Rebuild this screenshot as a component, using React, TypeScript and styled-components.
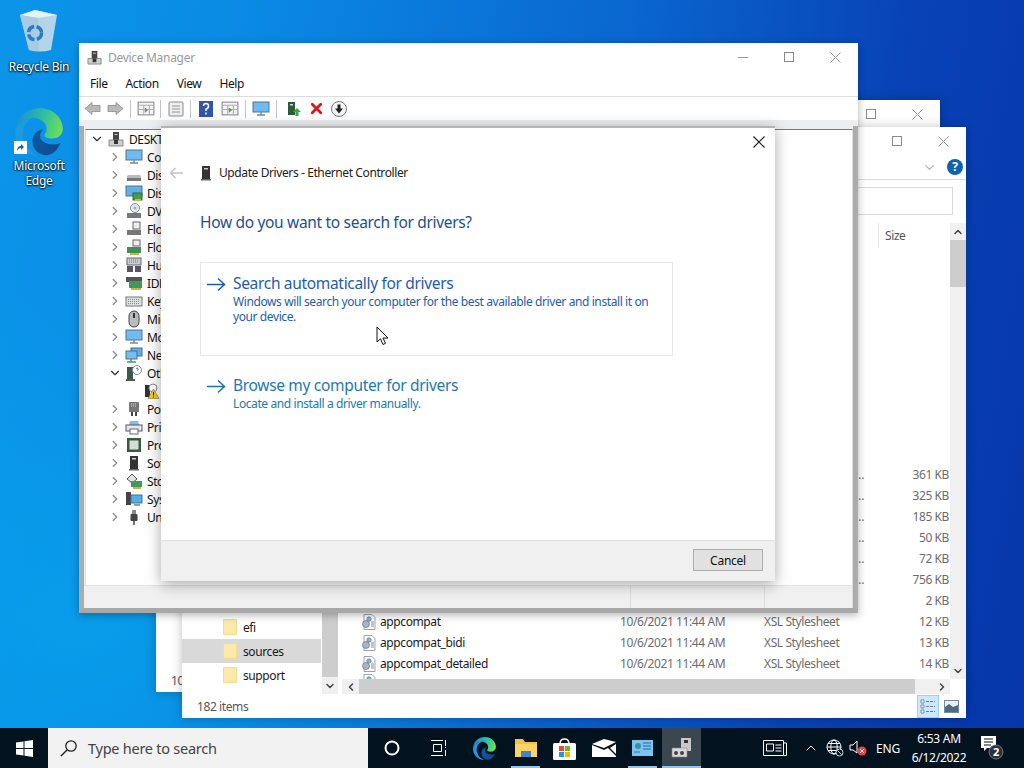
import React from "react";
import styled, { createGlobalStyle } from "styled-components";
import { ChevronRight, ChevronDown, ChevronUp, ChevronLeft, X } from "lucide-react";

const GlobalStyle = createGlobalStyle`
  html, body { margin: 0; padding: 0; width: 1024px; height: 768px; overflow: hidden; }
  * { box-sizing: border-box; }
  body { font-family: "Noto Sans", "Open Sans", "Liberation Sans", sans-serif; font-size: 12px; letter-spacing: -0.4px; }
`;

const Screen = styled.div`
  position: relative;
  width: 1024px;
  height: 768px;
  overflow: hidden;
  display: flex;
  flex-direction: column;
`;

const Wallpaper = styled.div`
  flex: 1;
  background:
    radial-gradient(ellipse 420px 340px at 10% 85%, rgba(6, 170, 240, 0.55), transparent),
    linear-gradient(100deg, #0b95e9 0%, #0a8ae4 22%, #0a66d0 55%, #0842b6 80%, #0636aa 100%);
`;

/* desktop icons */
const DesktopIcons = styled.div`
  position: absolute;
  left: 0;
  top: 8px;
  width: 78px;
  display: flex;
  flex-direction: column;
  gap: 32px;
  align-items: center;
`;

const DesktopIcon = styled.div<{ $gap?: number }>`
  position: relative;
  display: flex;
  flex-direction: column;
  align-items: center;
  gap: ${(p) => p.$gap ?? 0}px;
  color: #fff;
  font-size: 12px;
  line-height: 15px;
  letter-spacing: -0.25px;
  text-align: center;
  text-shadow: 0 1px 2px #000, 0 0 2px #000;
`;

const ShortcutBadge = styled.span`
  position: absolute;
  left: 1px;
  top: 35px;
  width: 13px;
  height: 13px;
  background: #fff;
  display: flex;
  align-items: center;
  justify-content: center;
`;

/* windows */
const Win = styled.div`
  position: absolute;
  background: #fff;
  display: flex;
  flex-direction: column;
`;

const BackWindow = styled(Win)`
  left: 156px;
  top: 100px;
  width: 784px;
  height: 592px;
  box-shadow: 0 0 10px rgba(0, 0, 0, 0.25);
`;

const Explorer = styled(Win)`
  left: 182px;
  top: 127px;
  width: 784px;
  height: 591px;
  box-shadow: 0 0 10px rgba(0, 0, 0, 0.25);
`;

const DeviceManager = styled(Win)`
  left: 79px;
  top: 43px;
  width: 779px;
  height: 570px;
  box-shadow: 0 2px 8px rgba(0, 0, 0, 0.3);
`;

const UpdateDialog = styled(Win)`
  left: 161px;
  top: 126px;
  width: 614px;
  height: 455px;
  border-top: 2px solid #b4b4b4;
  box-shadow: 0 3px 14px rgba(0, 0, 0, 0.35);
`;

const TitleBar = styled.div`
  height: 28px;
  flex: none;
  display: flex;
  align-items: center;
  color: #999;
  font-size: 12px;
  letter-spacing: -0.3px;
`;

const TitleIcon = styled.span`
  display: flex;
  margin: 0 6px 0 8px;
`;

const TitleText = styled.span`
  flex: 1;
`;

const CaptionButton = styled.span`
  width: 46px;
  height: 28px;
  display: flex;
  align-items: center;
  justify-content: center;
`;

const Caption = () => (
  <>
    <CaptionButton>
      <svg width="11" height="11"><path d="M0 5.500h10" stroke="#999" /></svg>
    </CaptionButton>
    <CaptionButton>
      <svg width="11" height="11"><rect x=".5" y=".5" width="9" height="9" fill="none" stroke="#8a8a8a" /></svg>
    </CaptionButton>
    <CaptionButton>
      <svg width="11" height="11"><path d="M.5.5l10 10M10.500.5l-10 10" stroke="#999" /></svg>
    </CaptionButton>
  </>
);

/* explorer */
const RibbonRow = styled.div`
  height: 25px;
  flex: none;
  display: flex;
  align-items: center;
  justify-content: flex-end;
  gap: 10px;
  padding-right: 3px;
  border-bottom: 1px solid #dadada;
  color: #b5b5b5;
`;

const HelpBadge = styled.span`
  width: 16px;
  height: 16px;
  border-radius: 50%;
  background: #0f62b0;
  color: #fff;
  font-size: 12px;
  font-weight: 700;
  line-height: 16px;
  text-align: center;
`;

const AddressRow = styled.div`
  height: 43px;
  flex: none;
  padding: 7px 13px 8px 0;
  display: flex;
  justify-content: flex-end;
`;

const SearchBox = styled.div`
  width: 300px;
  border: 1px solid #d9d9d9;
`;

const ExplorerBody = styled.div`
  flex: 1;
  min-height: 0;
  display: flex;
`;

const NavPane = styled.div`
  width: 156px;
  flex: none;
  display: flex;
`;

const NavTree = styled.div`
  flex: 1;
  display: flex;
  flex-direction: column;
  justify-content: flex-end;
  padding-bottom: 7px;
  margin-right: 1px;
`;

const NavRow = styled.div<{ $selected?: boolean }>`
  height: 24px;
  display: flex;
  align-items: center;
  gap: 6px;
  padding-left: 41px;
  color: #1a1a1a;
  background: ${(p) => (p.$selected ? "#d9d9d9" : "transparent")};
`;

const VScroll = styled.div`
  width: 16px;
  flex: none;
  display: flex;
  flex-direction: column;
  align-items: center;
  background: #f0f0f0;
  color: #444;
`;

const ScrollArrow = styled.span`
  height: 17px;
  width: 100%;
  flex: none;
  display: flex;
  align-items: center;
  justify-content: center;
`;

const ScrollTrack = styled.div`
  flex: 1;
  width: 100%;
`;

const ScrollThumb = styled.div<{ $size: number }>`
  width: 100%;
  height: ${(p) => p.$size}px;
  flex: none;
  background: #cdcdcd;
`;

const NavThumbWrap = styled.div`
  flex: 1;
  width: 100%;
  background: #cdcdcd;
`;

const FilePane = styled.div`
  flex: 1;
  min-width: 0;
  display: flex;
  flex-direction: column;
  padding-left: 4px;
`;

const FileUpper = styled.div`
  flex: 1;
  min-height: 0;
  display: flex;
`;

const FileList = styled.div`
  flex: 1;
  min-width: 0;
  display: flex;
  flex-direction: column;
`;

const columns = "278px 144px 116px 70px";

const ColumnHeader = styled.div`
  height: 25px;
  flex: none;
  display: grid;
  grid-template-columns: ${columns};
  align-items: center;
  color: #555;
`;

const HeaderCell = styled.span`
  border-left: 1px solid #e5e5e5;
  margin-left: -2px;
  padding-left: 6px;
  line-height: 25px;
`;

const FileRows = styled.div`
  flex: 1;
  min-height: 0;
  display: flex;
  flex-direction: column;
  justify-content: flex-end;
  overflow: hidden;
`;

const FileRow = styled.div<{ $clipped?: boolean }>`
  height: ${(p) => (p.$clipped ? 5 : 21)}px;
  flex: none;
  display: grid;
  grid-template-columns: ${columns};
  align-items: ${(p) => (p.$clipped ? "start" : "center")};
  overflow: hidden;
  color: #6d6d6d;
`;

const NameCell = styled.span`
  display: flex;
  align-items: center;
  gap: 4px;
  padding-left: 19px;
  color: #1a1a1a;
`;

const TypeCell = styled.span`
  padding-right: 14px;
  overflow: hidden;
  white-space: nowrap;
  text-overflow: ellipsis;
`;

const SizeCell = styled.span`
  text-align: right;
  padding-right: 1px;
`;

const HScroll = styled.div`
  height: 15px;
  flex: none;
  display: flex;
  align-items: center;
  background: #f0f0f0;
  margin-right: 16px;
  color: #444;
`;

const HArrow = styled.span`
  width: 17px;
  flex: none;
  display: flex;
  justify-content: center;
`;

const HThumb = styled.div`
  flex: 1;
  height: 15px;
  background: #cdcdcd;
  margin-right: 18px;
`;

const StatusRow = styled.div`
  height: 24px;
  flex: none;
  display: flex;
  align-items: center;
  justify-content: space-between;
  padding: 0 4px 0 15px;
  color: #555;
`;

const ViewButtons = styled.div`
  display: flex;
  gap: 1px;
`;

const ViewButton = styled.span<{ $active?: boolean }>`
  width: 22px;
  height: 23px;
  display: flex;
  align-items: center;
  justify-content: center;
  background: ${(p) => (p.$active ? "#cce8ff" : "transparent")};
  border: 1px solid ${(p) => (p.$active ? "#99d1ff" : "transparent")};
`;

/* device manager */
const MenuBar = styled.div`
  height: 26px;
  flex: none;
  display: flex;
  align-items: center;
  gap: 18px;
  padding-left: 11px;
  border-bottom: 1px solid #dcdcdc;
  color: #111;
`;

const Toolbar = styled.div`
  height: 23px;
  flex: none;
  display: flex;
  align-items: center;
  padding-left: 2px;
  background: #fff;
`;

const ToolButton = styled.span<{ $w?: number }>`
  width: ${(p) => p.$w ?? 23}px;
  flex: none;
  display: flex;
  justify-content: center;
`;

const ToolSep = styled.span`
  width: 1px;
  height: 18px;
  background: #c4c4c4;
  margin: 0 3px;
  flex: none;
`;

const DmBody = styled.div`
  flex: 1;
  min-height: 0;
  display: flex;
  flex-direction: column;
  background: #eceef0;
  padding-top: 6px;
`;

const DmFrame = styled.div`
  flex: 1;
  min-height: 0;
  display: flex;
  flex-direction: column;
  border-left: 5px solid #a9abad;
  border-right: 5px solid #acacac;
  border-bottom: 5px solid #a8a8a8;
  padding: 3px 0 0 1px;
`;

const TreePanel = styled.div`
  flex: 1;
  min-height: 0;
  background: #fff;
  border-top: 1px solid #7a7a7a;
  border-right: 1px solid #dedede;
  border-left: 1px solid #dedede;
  overflow: hidden;
`;

const TreeRow = styled.div<{ $depth: number }>`
  height: 18px;
  display: flex;
  align-items: center;
  padding-left: ${(p) => 4 + p.$depth * 18}px;
  white-space: nowrap;
  color: #111;
`;

const Toggle = styled.span`
  width: 14px;
  flex: none;
  display: flex;
  justify-content: center;
  color: #8a8a8a;
  margin-right: 3px;
`;

const TreeIconSlot = styled.span`
  width: 18px;
  flex: none;
  display: flex;
  justify-content: center;
  margin-right: 4px;
`;

const DmStatus = styled.div`
  height: 23px;
  flex: none;
  display: grid;
  grid-template-columns: 547px 134px 1fr;
  background: #f0f0f0;
  margin-left: -1px;
`;

const DmStatusCell = styled.span`
  border-right: 1px solid #dcdcdc;
  border-top: 1px solid #e2e2e2;
`;

/* dialog */
const DialogCloseRow = styled.div`
  height: 28px;
  flex: none;
  display: flex;
  justify-content: flex-end;
  padding: 8px 10px 0 0;
`;

const DialogHeader = styled.div`
  display: flex;
  align-items: center;
  padding: 8px 0 0 8px;
  color: #222;
`;

const BackArrow = styled.span`
  width: 16px;
  display: flex;
  margin-right: 12px;
`;

const DialogContent = styled.div`
  flex: 1;
  padding: 29px 102px 0 39px;
  display: flex;
  flex-direction: column;
`;

const Heading = styled.div`
  color: #1d4f91;
  font-size: 15.5px;
  letter-spacing: -0.32px;
  line-height: 24px;
  margin-bottom: 28px;
`;

const CommandLink = styled.div<{ $focused?: boolean }>`
  height: ${(p) => (p.$focused ? 94 : 60)}px;
  border: 1px solid ${(p) => (p.$focused ? "#e6e6e6" : "transparent")};
  display: flex;
  padding: 9px 0 0 6px;
  margin-bottom: 8px;
`;

const LinkArrow = styled.span`
  width: 20px;
  margin-right: 6px;
  flex: none;
  display: flex;
  height: 24px;
  align-items: center;
`;

const LinkText = styled.div`
  display: flex;
  flex-direction: column;
`;

const LinkTitle = styled.div<{ $color: string }>`
  color: ${(p) => p.$color};
  font-size: 15.5px;
  letter-spacing: -0.32px;
  line-height: 22px;
`;

const LinkNote = styled.div<{ $color: string }>`
  color: ${(p) => p.$color};
  font-size: 12px;
  line-height: 15px;
`;

const DialogFooter = styled.div`
  height: 41px;
  flex: none;
  background: #f0f0f0;
  border-top: 1px solid #e0e0e0;
  display: flex;
  justify-content: flex-end;
  align-items: flex-start;
  padding: 8px 12px 0 0;
`;

const CancelButton = styled.button`
  width: 70px;
  height: 22px;
  background: #e1e1e1;
  border: 1px solid #adadad;
  font: inherit;
  letter-spacing: -0.25px;
  color: #111;
  padding: 0;
`;

const Pointer = styled.svg`
  position: absolute;
  left: 376px;
  top: 326px;
`;

/* taskbar */
const Taskbar = styled.div`
  height: 40px;
  flex: none;
  background: #02121f;
  display: flex;
  align-items: stretch;
  color: #fff;
  letter-spacing: -0.25px;
`;

const StartButton = styled.div`
  width: 48px;
  display: flex;
  align-items: center;
  justify-content: center;
`;

const SearchBar = styled.div`
  width: 320px;
  background: #f2f2f2;
  display: flex;
  align-items: center;
  gap: 10px;
  padding-left: 12px;
  color: #444;
  font-size: 14.5px;
`;

const TaskButton = styled.div<{ $w?: number; $active?: boolean; $open?: boolean }>`
  position: relative;
  width: ${(p) => p.$w ?? 39}px;
  flex: none;
  display: flex;
  align-items: center;
  justify-content: center;
  background: ${(p) => (p.$active ? "#3b4750" : "transparent")};
  &::after {
    content: "";
    position: absolute;
    bottom: 0;
    left: ${(p) => (p.$active ? 0 : 5)}px;
    right: ${(p) => (p.$active ? 0 : 5)}px;
    height: 2px;
    background: ${(p) => (p.$open ? "#8ec5ec" : "transparent")};
  }
`;

const Tray = styled.div`
  margin-left: auto;
  padding-right: 12px;
  display: flex;
  align-items: center;
`;

const TraySlot = styled.span<{ $w: number }>`
  width: ${(p) => p.$w}px;
  display: flex;
  justify-content: center;
  align-items: center;
`;

const Clock = styled.div`
  width: 66px;
  text-align: center;
  font-size: 12px;
  line-height: 19px;
`;

/* drawings */
const EdgeLogo = ({ size, id }: { size: number; id: string }) => (
  <svg width={size} height={size} viewBox="0 0 48 48">
    <defs>
      <linearGradient id={`${id}a`} x1="0" y1="0.4" x2="1" y2="0.6">
        <stop offset="0" stopColor="#1a8fd8" />
        <stop offset="0.55" stopColor="#2fbfa0" />
        <stop offset="1" stopColor="#6fdf56" />
      </linearGradient>
      <linearGradient id={`${id}b`} x1="0" y1="0" x2="1" y2="1">
        <stop offset="0" stopColor="#0c59a4" />
        <stop offset="1" stopColor="#114a8b" />
      </linearGradient>
    </defs>
    <path d="M2 23C3 11 12 2 25 2c12 0 21 9 21 19 0 6-5 9-10 9-4 0-7-1-7-3 0-1 2-2 2-6 0-5-5-10-12-10C10 11 3 17 2 23z" fill={`url(#${id}a)`} />
    <path d="M2 23c1-6 8-12 17-12-6 2-10 8-10 15 0 9 6 17 15 20C11 46 1 36 2 23z" fill="#1d9ae0" />
    <path d="M44 34c-2 1-4 1.500-7 1.500-7 0-12-3-12-8 0-3 2-5 3-6-6 .5-10 5-10 11 0 7 5 12 12 13 6 0 11-4 14-11.500z" fill={`url(#${id}b)`} />
  </svg>
);

const RecycleBin = () => (
  <svg width="40" height="44" viewBox="0 0 40 44">
    <path d="M1 7L16 2l22 5-6 35q-11 3-22 0z" fill="#b3d5ea" />
    <path d="M1 7L16 2l22 5-19 3z" fill="#e6f1f7" />
    <path d="M1 7l18 3 1 33q-6 0-10-1z" fill="#a6cbe2" />
    <circle cx="16" cy="25" r="6.500" fill="none" stroke="#2a7bc0" strokeWidth="3.500" strokeDasharray="8 2.500" />
  </svg>
);

const ComputerTower = ({ size = 16 }: { size?: number }) => (
  <svg width={size} height={size} viewBox="0 0 16 16">
    <rect x="5" y="1" width="6" height="9" fill="#444" />
    <rect x="6.500" y="3" width="3" height="1" fill="#ccc" />
    <path d="M1 9h14v6H1z" fill="#cfcfcf" stroke="#777" strokeWidth=".8" />
    <rect x="6" y="9" width="4" height="4" fill="#333" />
  </svg>
);

const Monitor = ({ stand = "#7a8b99" }: { stand?: string }) => (
  <svg width="18" height="16" viewBox="0 0 18 16">
    <rect x="1" y="1" width="16" height="10" fill="#6fbdf0" stroke="#54738a" />
    <path d="M5 14h8M9 11v3" stroke={stand} strokeWidth="1.500" />
  </svg>
);

const CommandArrow = ({ color }: { color: string }) => (
  <svg width="19" height="15" viewBox="0 0 19 15">
    <path d="M0 7.500h17.500M11 1.500l6.500 6-6.500 6" fill="none" stroke={color} strokeWidth="1.500" />
  </svg>
);

type TreeKind =
  | "pc" | "monitor" | "disk" | "display" | "dvd" | "floppy" | "floppyCtl" | "hid" | "ide" | "keyboard" | "mouse"
  | "network" | "other" | "warn" | "port" | "printer" | "cpu" | "tower" | "storage" | "system" | "usb";

const TreeIcon = ({ kind }: { kind: TreeKind }) => {
  switch (kind) {
    case "pc":
      return <ComputerTower />;
    case "monitor":
      return <Monitor />;
    case "disk":
      return (
        <svg width="16" height="16" viewBox="0 0 16 16">
          <path d="M2 8h12l1 3v3H1v-3z" fill="#777" />
          <path d="M2 8h12l1 3H1z" fill="#bbb" />
        </svg>
      );
    case "display":
      return (
        <svg width="18" height="16" viewBox="0 0 18 16">
          <rect x="1" y="1" width="16" height="10" fill="#5fb0e8" stroke="#54738a" />
          <rect x="8" y="8" width="9" height="7" fill="#4c9a52" stroke="#2e6a36" />
          <rect x="10" y="14" width="6" height="2" fill="#d5b13e" />
        </svg>
      );
    case "dvd":
      return (
        <svg width="16" height="16" viewBox="0 0 16 16">
          <circle cx="9" cy="5" r="4.500" fill="#e4ebe8" stroke="#88a" />
          <circle cx="9" cy="5" r="1.500" fill="#aaa" />
          <path d="M1 10h14v5H1z" fill="#777" />
        </svg>
      );
    case "floppy":
      return (
        <svg width="16" height="16" viewBox="0 0 16 16">
          <rect x="7" y="1" width="7" height="7" fill="#eee" stroke="#666" />
          <path d="M1 9h14v5H1z" fill="#777" />
        </svg>
      );
    case "floppyCtl":
      return (
        <svg width="16" height="16" viewBox="0 0 16 16">
          <rect x="7" y="1" width="7" height="6" fill="#eee" stroke="#666" />
          <rect x="1" y="8" width="14" height="6" fill="#3f8f5a" />
          <rect x="4" y="14" width="9" height="2" fill="#d5b13e" />
        </svg>
      );
    case "hid":
      return (
        <svg width="18" height="16" viewBox="0 0 18 16">
          <rect x="2" y="1" width="14" height="7" fill="#c9ced2" stroke="#667" />
          <path d="M4 3h10M4 5h10" stroke="#778" strokeDasharray="1 1" />
          <path d="M2 9h6v6H2zM10 9h6v6h-6z" fill="#556" />
        </svg>
      );
    case "ide":
      return (
        <svg width="18" height="16" viewBox="0 0 18 16">
          <rect x="1" y="2" width="16" height="5" fill="#555" />
          <rect x="4" y="6" width="13" height="7" fill="#3f9a5a" />
          <rect x="6" y="13" width="10" height="2" fill="#d5b13e" />
        </svg>
      );
    case "keyboard":
      return (
        <svg width="18" height="16" viewBox="0 0 18 16">
          <rect x="1" y="4" width="16" height="9" fill="#dde0e2" stroke="#777" />
          <path d="M3 6.500h12M3 8.500h12M3 10.500h12" stroke="#888" strokeDasharray="1 1" />
        </svg>
      );
    case "mouse":
      return (
        <svg width="16" height="18" viewBox="0 0 16 18">
          <rect x="3" y="1" width="10" height="16" rx="5" fill="#b9bcbe" stroke="#444" />
          <path d="M8 3v5" stroke="#333" strokeWidth="2" />
        </svg>
      );
    case "network":
      return (
        <svg width="18" height="16" viewBox="0 0 18 16">
          <rect x="6" y="1" width="11" height="8" fill="#5fb0e8" stroke="#4a6f88" />
          <rect x="1" y="4" width="11" height="8" fill="#6fc0f0" stroke="#4a6f88" />
          <path d="M6 12v3M2 15h9" stroke="#4c9a52" strokeWidth="1.500" />
        </svg>
      );
    case "other":
      return (
        <svg width="18" height="16" viewBox="0 0 18 16">
          <rect x="2" y="2" width="6" height="12" fill="#3c5a4a" />
          <rect x="1" y="14" width="9" height="2" fill="#555" />
          <circle cx="12" cy="5" r="4.500" fill="#fff" stroke="#889" />
          <path d="M11 3.500q1-1 2 0t-1 2" fill="none" stroke="#667" />
        </svg>
      );
    case "warn":
      return (
        <svg width="16" height="16" viewBox="0 0 16 16">
          <rect x="1" y="2" width="5" height="12" fill="#333" />
          <circle cx="9" cy="5" r="4" fill="#fff" stroke="#889" />
          <path d="M9.500 6l5.500 9.500H4z" fill="#f2cc2e" stroke="#8a7420" strokeWidth=".6" />
          <path d="M9.500 9v3.500M9.500 13.500v1" stroke="#222" />
        </svg>
      );
    case "port":
      return (
        <svg width="16" height="16" viewBox="0 0 16 16">
          <rect x="3" y="1" width="10" height="10" rx="1" fill="#777" />
          <path d="M5 3h6M5 5h6" stroke="#ddd" strokeDasharray="1 1" />
          <path d="M5 11h2v4H5zM9 11h2v4H9z" fill="#444" />
        </svg>
      );
    case "printer":
      return (
        <svg width="18" height="16" viewBox="0 0 18 16">
          <path d="M5 2h8l1 4H4z" fill="#78c0ea" />
          <rect x="1" y="6" width="16" height="6" fill="#e8e8e8" stroke="#556" />
          <rect x="5" y="10" width="8" height="5" fill="#fff" stroke="#667" />
        </svg>
      );
    case "cpu":
      return (
        <svg width="16" height="16" viewBox="0 0 16 16">
          <rect x="1" y="1" width="14" height="14" fill="#3a5a40" />
          <rect x="3.500" y="3.500" width="9" height="9" fill="#d3dfd6" />
        </svg>
      );
    case "tower":
      return (
        <svg width="16" height="16" viewBox="0 0 16 16">
          <rect x="4" y="1" width="8" height="13" fill="#333" />
          <rect x="6" y="3" width="4" height="1.500" fill="#ccc" />
          <rect x="3" y="14" width="10" height="1.500" fill="#666" />
        </svg>
      );
    case "storage":
      return (
        <svg width="18" height="16" viewBox="0 0 18 16">
          <path d="M2 6l5-5 5 5-5 4z" fill="#dfe3e3" stroke="#555" />
          <rect x="6" y="8" width="11" height="6" fill="#3f9a5a" />
          <rect x="8" y="14" width="8" height="2" fill="#d5b13e" />
        </svg>
      );
    case "system":
      return (
        <svg width="18" height="16" viewBox="0 0 18 16">
          <rect x="1" y="1" width="5" height="13" fill="#444" />
          <rect x="6" y="4" width="11" height="8" fill="#4fb0ea" stroke="#4a6f88" />
          <path d="M9 14h6" stroke="#6a7f8a" strokeWidth="1.500" />
        </svg>
      );
    case "usb":
      return (
        <svg width="16" height="16" viewBox="0 0 16 16">
          <rect x="6" y="1" width="4" height="4" fill="#888" />
          <rect x="4.500" y="5" width="7" height="7" rx="1" fill="#444" />
          <path d="M8 12v4" stroke="#444" strokeWidth="1.500" />
        </svg>
      );
  }
};

const XslIcon = () => (
  <svg width="15" height="16" viewBox="0 0 15 16">
    <path d="M3 .5h8l3 3v12H3z" fill="#fff" stroke="#9aa5b0" />
    <circle cx="8" cy="5" r="2.200" fill="#8ab4d8" stroke="#567" strokeWidth=".6" />
    <circle cx="5" cy="10" r="3.500" fill="#a8b6c4" stroke="#567" strokeWidth=".6" />
    <path d="M10 8h3M10 10h3M10 12h3" stroke="#7a8ea0" />
  </svg>
);

const NavFolder = () => (
  <svg width="14" height="16" viewBox="0 0 14 16">
    <rect x="0" y="0" width="14" height="16" rx="1" fill="#f6dd8a" />
    <rect x="1" y="1" width="12" height="14" fill="#fbe9a9" />
  </svg>
);

const toolGrid = (accent: string) => (
  <svg width="18" height="17" viewBox="0 0 16 16" preserveAspectRatio="none">
    <rect x="1" y="2" width="14" height="12" fill="#f4f4f4" stroke="#8a8a8a" />
    <path d="M1 5h14M6 5v9M11 5v9M1 9h14" stroke="#b0b0b0" />
    <path d="M7 7l3 2.500L7 12z" fill={accent} />
  </svg>
);

const GreyArrow = ({ flip, tint }: { flip?: boolean; tint: string }) => (
  <svg width="17" height="15" viewBox="0 0 17 15" style={flip ? { transform: "scaleX(-1)" } : undefined}>
    <path d="M1 7.500L8 1.500v3h8v6H8v3z" fill={tint} stroke="#8a8a8a" strokeWidth=".8" />
  </svg>
);

const treeRows: { name: string; kind: TreeKind; depth: number; open?: boolean; leaf?: boolean }[] = [
  { name: "DESKTOP-4QJ2R7B", kind: "pc", depth: 0, open: true },
  { name: "Computer", kind: "monitor", depth: 1 },
  { name: "Disk drives", kind: "disk", depth: 1 },
  { name: "Display adapters", kind: "display", depth: 1 },
  { name: "DVD/CD-ROM drives", kind: "dvd", depth: 1 },
  { name: "Floppy disk drives", kind: "floppy", depth: 1 },
  { name: "Floppy drive controllers", kind: "floppyCtl", depth: 1 },
  { name: "Human Interface Devices", kind: "hid", depth: 1 },
  { name: "IDE ATA/ATAPI controllers", kind: "ide", depth: 1 },
  { name: "Keyboards", kind: "keyboard", depth: 1 },
  { name: "Mice and other pointing devices", kind: "mouse", depth: 1 },
  { name: "Monitors", kind: "monitor", depth: 1 },
  { name: "Network adapters", kind: "network", depth: 1 },
  { name: "Other devices", kind: "other", depth: 1, open: true },
  { name: "Ethernet Controller", kind: "warn", depth: 2, leaf: true },
  { name: "Ports (COM & LPT)", kind: "port", depth: 1 },
  { name: "Print queues", kind: "printer", depth: 1 },
  { name: "Processors", kind: "cpu", depth: 1 },
  { name: "Software devices", kind: "tower", depth: 1 },
  { name: "Storage controllers", kind: "storage", depth: 1 },
  { name: "System devices", kind: "system", depth: 1 },
  { name: "Universal Serial Bus controllers", kind: "usb", depth: 1 },
];

const fileRows = [
  { name: "apisetschema", date: "10/6/2021 11:44 AM", type: "Application extension", size: "361 KB" },
  { name: "appraiser", date: "10/6/2021 11:44 AM", type: "Application extension", size: "325 KB" },
  { name: "apphelp", date: "10/6/2021 11:44 AM", type: "Application extension", size: "185 KB" },
  { name: "appcompat_legacy", date: "10/6/2021 11:44 AM", type: "Application extension", size: "50 KB" },
  { name: "appmig", date: "10/6/2021 11:44 AM", type: "Application extension", size: "72 KB" },
  { name: "appmgmts", date: "10/6/2021 11:44 AM", type: "Application extension", size: "756 KB" },
  { name: "appcompat.cat", date: "10/6/2021 11:44 AM", type: "Security", size: "2 KB" },
  { name: "appcompat", date: "10/6/2021 11:44 AM", type: "XSL Stylesheet", size: "12 KB" },
  { name: "appcompat_bidi", date: "10/6/2021 11:44 AM", type: "XSL Stylesheet", size: "13 KB" },
  { name: "appcompat_detailed", date: "10/6/2021 11:44 AM", type: "XSL Stylesheet", size: "14 KB" },
];

const App: React.FC = () => {
  return (
    <Screen>
      <GlobalStyle />
      <Wallpaper />

      <DesktopIcons>
        <DesktopIcon $gap={7}>
          <RecycleBin />
          <span>Recycle Bin</span>
        </DesktopIcon>
        <DesktopIcon>
          <EdgeLogo size={52} id="desk" />
          <ShortcutBadge>
            <svg width="9" height="9" viewBox="0 0 9 9"><path d="M1 8c0-4 2-5 4-5V1l3 3-3 3V5C3 5 2 6 1 8z" fill="#1c5fb0" /></svg>
          </ShortcutBadge>
          <span>Microsoft<br />Edge</span>
        </DesktopIcon>
      </DesktopIcons>

      <BackWindow>
        <TitleBar>
          <TitleText />
          <Caption />
        </TitleBar>
        <ExplorerBody />
        <StatusRow>10 items</StatusRow>
      </BackWindow>

      <Explorer>
        <TitleBar>
          <TitleText />
          <Caption />
        </TitleBar>
        <RibbonRow>
          <ChevronDown size={15} />
          <HelpBadge>?</HelpBadge>
        </RibbonRow>
        <AddressRow>
          <SearchBox />
        </AddressRow>
        <ExplorerBody>
          <NavPane>
            <NavTree>
              <NavRow><NavFolder />efi</NavRow>
              <NavRow $selected><NavFolder />sources</NavRow>
              <NavRow><NavFolder />support</NavRow>
            </NavTree>
            <VScroll>
              <NavThumbWrap />
              <ScrollArrow><ChevronDown size={12} strokeWidth={3} /></ScrollArrow>
            </VScroll>
          </NavPane>
          <FilePane>
            <FileUpper>
              <FileList>
                <ColumnHeader>
                  <HeaderCell>Name</HeaderCell>
                  <HeaderCell>Date modified</HeaderCell>
                  <HeaderCell>Type</HeaderCell>
                  <HeaderCell>Size</HeaderCell>
                </ColumnHeader>
                <FileRows>
                  {fileRows.map((f) => (
                    <FileRow key={f.name}>
                      <NameCell><XslIcon />{f.name}</NameCell>
                      <span>{f.date}</span>
                      <TypeCell>{f.type}</TypeCell>
                      <SizeCell>{f.size}</SizeCell>
                    </FileRow>
                  ))}
                  <FileRow $clipped>
                    <NameCell><XslIcon /></NameCell>
                  </FileRow>
                </FileRows>
              </FileList>
              <VScroll>
                <ScrollArrow><ChevronUp size={12} strokeWidth={3} /></ScrollArrow>
                <ScrollThumb $size={47} />
                <ScrollTrack />
                <ScrollArrow><ChevronDown size={12} strokeWidth={3} /></ScrollArrow>
              </VScroll>
            </FileUpper>
            <HScroll>
              <HArrow><ChevronLeft size={12} strokeWidth={3} /></HArrow>
              <HThumb />
              <HArrow><ChevronRight size={12} strokeWidth={3} /></HArrow>
            </HScroll>
          </FilePane>
        </ExplorerBody>
        <StatusRow>
          182 items
          <ViewButtons>
            <ViewButton $active>
              <svg width="16" height="15" viewBox="0 0 16 15">
                <path d="M1 1h3v3H1zM1 6h3v3H1zM1 11h3v3H1z" fill="#fff" stroke="#7a8a99" />
                <path d="M6 2.500h9M6 7.500h9M6 12.500h9" stroke="#6a7a88" strokeDasharray="3 1" />
              </svg>
            </ViewButton>
            <ViewButton>
              <svg width="15" height="13" viewBox="0 0 15 13">
                <rect x=".5" y=".5" width="14" height="12" fill="#e8eef2" stroke="#7a8a99" />
                <path d="M1 7l4-3 4 3 5-2v7H1z" fill="#4f6a80" />
              </svg>
            </ViewButton>
          </ViewButtons>
        </StatusRow>
      </Explorer>

      <DeviceManager>
        <TitleBar>
          <TitleIcon><ComputerTower size={15} /></TitleIcon>
          <TitleText>Device Manager</TitleText>
          <Caption />
        </TitleBar>
        <MenuBar>
          <span>File</span>
          <span>Action</span>
          <span>View</span>
          <span>Help</span>
        </MenuBar>
        <Toolbar>
          <ToolButton><GreyArrow tint="#b9b9b9" /></ToolButton>
          <ToolButton><GreyArrow flip tint="#b9b9b9" /></ToolButton>
          <ToolSep />
          <ToolButton>{toolGrid("#888")}</ToolButton>
          <ToolSep />
          <ToolButton>
            <svg width="16" height="16" viewBox="0 0 16 16">
              <rect x="1" y="1" width="14" height="14" rx="1" fill="#eee" stroke="#8a8a8a" />
              <path d="M4 5h8M4 8h8M4 11h8" stroke="#999" />
            </svg>
          </ToolButton>
          <ToolSep />
          <ToolButton $w={24}>
            <svg width="14" height="16" viewBox="0 0 14 16">
              <rect width="14" height="16" fill="#3356a8" />
              <path d="M4.500 5q0-2.500 2.500-2.500T9.500 5 7 8v2M7 11.500v2" fill="none" stroke="#fff" strokeWidth="1.500" />
            </svg>
          </ToolButton>
          <ToolButton $w={24}>{toolGrid("#5a9a4a")}</ToolButton>
          <ToolSep />
          <ToolButton $w={24}><Monitor /></ToolButton>
          <ToolSep />
          <ToolButton $w={27}>
            <svg width="16" height="16" viewBox="0 0 16 16">
              <rect x="2" y="1" width="7" height="13" fill="#2f5a3a" />
              <rect x="4" y="3" width="3" height="1.500" fill="#cde" />
              <path d="M11 7l4 4h-2.500v4h-3v-4H7z" fill="#3aa84a" />
            </svg>
          </ToolButton>
          <ToolButton $w={19}>
            <X size={17} color="#d01c24" strokeWidth={4} />
          </ToolButton>
          <ToolButton $w={26}>
            <svg width="16" height="16" viewBox="0 0 16 16">
              <circle cx="8" cy="8" r="7.500" fill="#f4f4f4" stroke="#777" />
              <path d="M6.500 3.500h3v4H12l-4 5-4-5h2.500z" fill="#222" />
            </svg>
          </ToolButton>
        </Toolbar>
        <DmBody>
          <DmFrame>
            <TreePanel>
              {treeRows.map((r) => (
                <TreeRow key={r.name} $depth={r.depth}>
                  {r.leaf ? (
                    <Toggle />
                  ) : (
                    <Toggle>
                      {r.open ? <ChevronDown size={14} color="#333" strokeWidth={2} /> : <ChevronRight size={14} strokeWidth={2} />}
                    </Toggle>
                  )}
                  <TreeIconSlot><TreeIcon kind={r.kind} /></TreeIconSlot>
                  {r.name}
                </TreeRow>
              ))}
            </TreePanel>
            <DmStatus>
              <DmStatusCell />
              <DmStatusCell />
              <DmStatusCell />
            </DmStatus>
          </DmFrame>
        </DmBody>
      </DeviceManager>

      <UpdateDialog>
        <DialogCloseRow>
          <svg width="12" height="12" viewBox="0 0 12 12">
            <path d="M.5.5l11 11M11.500.5l-11 11" stroke="#222" strokeWidth="1.200" />
          </svg>
        </DialogCloseRow>
        <DialogHeader>
          <BackArrow>
            <svg width="14" height="12" viewBox="0 0 14 12">
              <path d="M14 6H1.500M6.500 1l-5 5 5 5" fill="none" stroke="#c4c4c4" strokeWidth="1.500" />
            </svg>
          </BackArrow>
          <TreeIconSlot><TreeIcon kind="tower" /></TreeIconSlot>
          Update Drivers - Ethernet Controller
        </DialogHeader>
        <DialogContent>
          <Heading>How do you want to search for drivers?</Heading>
          <CommandLink $focused>
            <LinkArrow><CommandArrow color="#1c5cb0" /></LinkArrow>
            <LinkText>
              <LinkTitle $color="#1f5cab">Search automatically for drivers</LinkTitle>
              <LinkNote $color="#1f5cab">
                Windows will search your computer for the best available driver and install it on your device.
              </LinkNote>
            </LinkText>
          </CommandLink>
          <CommandLink>
            <LinkArrow><CommandArrow color="#1c74a8" /></LinkArrow>
            <LinkText>
              <LinkTitle $color="#2379ad">Browse my computer for drivers</LinkTitle>
              <LinkNote $color="#2379ad">Locate and install a driver manually.</LinkNote>
            </LinkText>
          </CommandLink>
        </DialogContent>
        <DialogFooter>
          <CancelButton>Cancel</CancelButton>
        </DialogFooter>
      </UpdateDialog>

      <Pointer width="13" height="20" viewBox="0 0 13 20">
        <path d="M1 1v15l3.500-3.200L7 18.500l2.500-1.200L7 12h5z" fill="#fff" stroke="#111" strokeWidth="1" />
      </Pointer>

      <Taskbar>
        <StartButton>
          <svg width="17" height="17" viewBox="0 0 17 17">
            <path d="M0 2.500L7.500 1.500v6.500H0zM8.500 1.300L17 0v8H8.500zM0 9h7.500v6.500L0 14.500zM8.500 9H17v8l-8.500-1.300z" fill="#fff" />
          </svg>
        </StartButton>
        <SearchBar>
          <svg width="18" height="18" viewBox="0 0 18 18">
            <circle cx="11" cy="7" r="5.200" fill="none" stroke="#222" strokeWidth="1.300" />
            <path d="M7 11l-6 6" stroke="#222" strokeWidth="1.400" />
          </svg>
          Type here to search
        </SearchBar>
        <TaskButton $w={48}>
          <svg width="16" height="16" viewBox="0 0 16 16"><circle cx="8" cy="8" r="6.500" fill="none" stroke="#fff" strokeWidth="2" /></svg>
        </TaskButton>
        <TaskButton $w={46}>
          <svg width="18" height="16" viewBox="0 0 18 16">
            <path d="M1 .5h12M1 15.500h12M3.500 4.500h8v7h-8z" fill="none" stroke="#fff" />
            <path d="M15.500 0v6M15.500 7v1M15.500 10v6" stroke="#fff" />
          </svg>
        </TaskButton>
        <TaskButton $w={44}><EdgeLogo size={25} id="task" /></TaskButton>
        <TaskButton $open>
          <svg width="22" height="20" viewBox="0 0 22 20">
            <path d="M0 1h8l2 3h12v15H0z" fill="#f3c04e" />
            <path d="M0 6h22v13H0z" fill="#fad467" />
            <path d="M6 19v-6h10v6z" fill="#3d87c8" />
          </svg>
        </TaskButton>
        <TaskButton>
          <svg width="23" height="23" viewBox="0 0 23 23">
            <path d="M7 7q0-5 4.500-5T16 7" fill="none" stroke="#fff" strokeWidth="1.500" />
            <rect y="6" width="23" height="17" rx="1.500" fill="#fff" />
            <path d="M6 9h5v5H6z" fill="#e84c2a" />
            <path d="M12 9h5v5h-5z" fill="#6fb824" />
            <path d="M6 15h5v5H6z" fill="#1b9ae0" />
            <path d="M12 15h5v5h-5z" fill="#f5b800" />
          </svg>
        </TaskButton>
        <TaskButton>
          <svg width="24" height="18" viewBox="0 0 24 18">
            <path d="M0 5L12 0l12 3-12 6z" fill="#fff" />
            <path d="M0 6l12 5 4-2 8 8v1H0z" fill="#fff" />
            <path d="M24 5v10l-6-6z" fill="#fff" />
          </svg>
        </TaskButton>
        <TaskButton $open>
          <svg width="21" height="16" viewBox="0 0 21 16">
            <rect width="21" height="16" fill="#7cc4ee" />
            <circle cx="6" cy="6" r="3" fill="#3d8f9a" />
            <path d="M11 3h8M11 6h8M11 9h8" stroke="#1f6fa8" />
            <path d="M2 12h6" stroke="#2a7bb5" />
          </svg>
        </TaskButton>
        <TaskButton $active $open>
          <svg width="22" height="22" viewBox="0 0 22 22">
            <rect x="10" y="1" width="10" height="13" fill="#c8c8c8" />
            <rect x="13" y="3" width="4" height="3" fill="#333" />
            <path d="M1 11h15v9H1z" fill="#d8d8d8" stroke="#888" strokeWidth=".6" />
            <circle cx="5" cy="16" r="2" fill="#444" />
            <circle cx="11" cy="16" r="2" fill="#444" />
          </svg>
        </TaskButton>
        <Tray>
          <TraySlot $w={46}>
            <svg width="24" height="16" viewBox="0 0 24 16">
              <path d="M.5.500h20v15H.5zM20.500 3h3v12.500h-3" fill="none" stroke="#fff" />
              <path d="M3.500 4h7v7h-7zM12.500 5h6M12.500 8h6M12.500 11h6" fill="none" stroke="#fff" />
            </svg>
          </TraySlot>
          <TraySlot $w={26}>
            <ChevronUp size={16} color="#fff" strokeWidth={1.500} />
          </TraySlot>
          <TraySlot $w={22}>
            <svg width="18" height="18" viewBox="0 0 18 18">
              <circle cx="8" cy="8" r="7" fill="none" stroke="#fff" />
              <ellipse cx="8" cy="8" rx="3.200" ry="7" fill="none" stroke="#fff" />
              <path d="M1 8h14M2 4.500h12M2 11.500h12" stroke="#fff" />
              <circle cx="13.500" cy="13.500" r="3.500" fill="#02121f" stroke="#cfd6dc" />
              <path d="M11.500 11.500l4 4" stroke="#cfd6dc" />
            </svg>
          </TraySlot>
          <TraySlot $w={24}>
            <svg width="18" height="16" viewBox="0 0 18 16">
              <path d="M1 5h3l4-4v12L4 10H1z" fill="none" stroke="#fff" />
              <circle cx="13" cy="11" r="4.500" fill="#e8404a" />
              <path d="M11 9l4 4M15 9l-4 4" stroke="#fff" />
            </svg>
          </TraySlot>
          <TraySlot $w={36}>ENG</TraySlot>
          <Clock>
            6:53 AM
            <br />
            6/12/2022
          </Clock>
          <TraySlot $w={40}>
            <svg width="26" height="26" viewBox="0 0 26 26">
              <path d="M2 1h15v12H8l-3 3v-3H2z" fill="#fff" />
              <path d="M5 4h9M5 7h9M5 10h7" stroke="#02121f" />
              <circle cx="17" cy="17" r="7" fill="#2a333b" stroke="#777" />
              <text x="17" y="21" fontSize="11" fontWeight="700" textAnchor="middle" fill="#fff">2</text>
            </svg>
          </TraySlot>
        </Tray>
      </Taskbar>
    </Screen>
  );
};

export default App;
